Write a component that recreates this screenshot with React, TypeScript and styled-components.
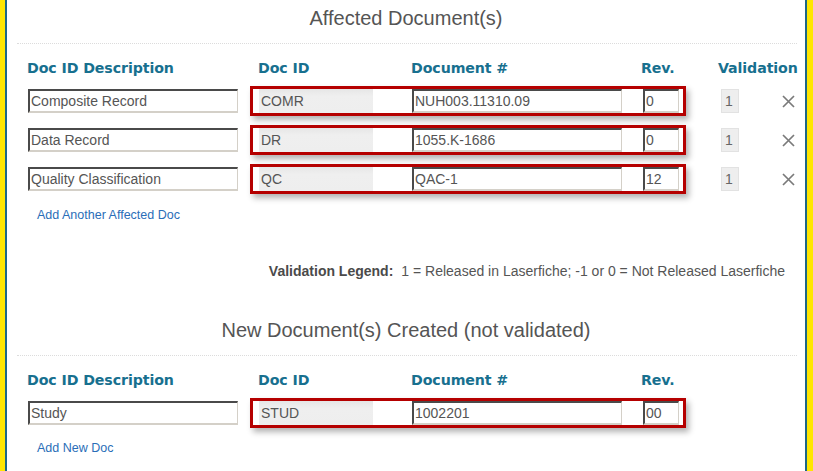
import React from 'react'
import styled, { createGlobalStyle } from 'styled-components'

const GlobalStyle = createGlobalStyle`
  html, body {
    margin: 0;
    padding: 0;
    background: #fff;
  }
  body {
    font-family: 'Liberation Sans', Arial, sans-serif;
  }
`

const Frame = styled.div({
  boxSizing: 'border-box',
  display: 'flex',
  height: '471px',
  borderLeft: '5px solid #ffe600',
  borderRight: '6px solid #ffe600',
  overflow: 'hidden',
})

const Panel = styled.div({
  flex: 1,
  display: 'flow-root',
  background: '#fff',
  borderLeft: '2px solid #1d6786',
  borderRight: '2px solid #1d6786',
})

const SectionTitle = styled.div<{ mt: number }>(props => ({
  marginTop: `${props.mt}px`,
  textAlign: 'center',
  fontSize: '20px',
  lineHeight: '24px',
  color: '#555',
}))

const Separator = styled.div({
  margin: '13px 8px 0 10px',
  borderTop: '1px dotted #dcdcdc',
})

const HeaderRow = styled.div({
  display: 'grid',
  gridTemplateColumns: '231px 153px 230px 77px auto',
  marginTop: '15px',
  paddingLeft: '20px',
  fontFamily: "'DejaVu Sans', Verdana, sans-serif",
  fontWeight: 700,
  fontSize: '14.2px',
  lineHeight: '18px',
  color: '#17708f',
  letterSpacing: '-0.1px',
})

const Rows = styled.div({
  display: 'flex',
  flexDirection: 'column',
  gap: '9px',
  marginTop: '9px',
  paddingLeft: '21px',
})

const Row = styled.div({
  display: 'flex',
  alignItems: 'center',
  height: '30px',
})

const TextInput = styled.input<{ w: number; ml?: number }>(props => ({
  boxSizing: 'border-box',
  width: `${props.w}px`,
  height: '24px',
  marginLeft: `${props.ml || 0}px`,
  padding: '0 1px',
  borderStyle: 'solid',
  borderWidth: '2px 1px 2px 2px',
  borderColor: '#4a4a4a #d4d0c8 #d4d0c8 #4a4a4a',
  fontFamily: "'Liberation Sans', Arial, sans-serif",
  fontSize: '14px',
  color: '#555',
  background: '#fff',
  outline: 'none',
}))

const IdGroup = styled.div({
  boxSizing: 'border-box',
  display: 'flex',
  alignItems: 'center',
  width: '436px',
  height: '30px',
  marginLeft: '12px',
  paddingLeft: '6px',
  border: '3px solid #b50000',
  boxShadow: '3px 4px 6px rgba(0, 0, 0, 0.3)',
})

const DocIdBox = styled.div({
  boxSizing: 'border-box',
  width: '114px',
  height: '24px',
  padding: '0 2px',
  background: 'linear-gradient(#e6e6e6, #efefef 30%, #eeeeee)',
  fontSize: '14px',
  lineHeight: '24px',
  color: '#555',
})

const ValidationBox = styled.div({
  boxSizing: 'border-box',
  width: '18px',
  height: '24px',
  marginLeft: '35px',
  paddingLeft: '3px',
  background: '#eeeeee',
  border: '1px solid #e2e2e2',
  fontSize: '14px',
  lineHeight: '22px',
  color: '#666',
})

const RemoveButton = styled.button({
  display: 'flex',
  alignItems: 'center',
  justifyContent: 'center',
  width: '14px',
  height: '14px',
  marginLeft: '42px',
  padding: 0,
  border: 'none',
  background: 'transparent',
  cursor: 'pointer',
})

const LinkText = styled.a<{ mt: number }>(props => ({
  display: 'block',
  marginTop: `${props.mt}px`,
  paddingLeft: '30px',
  fontSize: '12.5px',
  lineHeight: '16px',
  color: '#2a6eb8',
  textDecoration: 'none',
  cursor: 'pointer',
}))

const Legend = styled.div({
  marginTop: '40px',
  paddingRight: '20px',
  textAlign: 'right',
  fontSize: '14px',
  lineHeight: '17px',
  color: '#555',
})

const LegendLabel = styled.span({
  fontWeight: 700,
  color: '#4a4a4a',
  marginRight: '8px',
})

interface DocRow {
  description: string
  docId: string
  docNumber: string
  rev: string
  validation?: string
}

const affected: DocRow[] = [
  { description: 'Composite Record', docId: 'COMR', docNumber: 'NUH003.11310.09', rev: '0', validation: '1' },
  { description: 'Data Record', docId: 'DR', docNumber: '1055.K-1686', rev: '0', validation: '1' },
  { description: 'Quality Classification', docId: 'QC', docNumber: 'QAC-1', rev: '12', validation: '1' },
]

const created: DocRow[] = [{ description: 'Study', docId: 'STUD', docNumber: '1002201', rev: '00' }]

function CloseIcon() {
  return (
    <svg width="13" height="13" viewBox="0 0 13 13">
      <path d="M1 1 L12 12 M12 1 L1 12" stroke="#7a7a7a" strokeWidth="1.7" fill="none" />
    </svg>
  )
}

function DocRowView({ row }: { row: DocRow }) {
  return (
    <Row>
      <TextInput w={210} defaultValue={row.description} />
      <IdGroup>
        <DocIdBox>{row.docId}</DocIdBox>
        <TextInput w={210} ml={39} defaultValue={row.docNumber} />
        <TextInput w={36} ml={21} defaultValue={row.rev} />
      </IdGroup>
      {row.validation && (
        <>
          <ValidationBox>{row.validation}</ValidationBox>
          <RemoveButton aria-label="Remove">
            <CloseIcon />
          </RemoveButton>
        </>
      )}
    </Row>
  )
}

function Header({ withValidation }: { withValidation?: boolean }) {
  return (
    <HeaderRow>
      <div>Doc ID Description</div>
      <div>Doc ID</div>
      <div>Document #</div>
      <div>Rev.</div>
      {withValidation && <div>Validation</div>}
    </HeaderRow>
  )
}

export default function App() {
  return (
    <>
      <GlobalStyle />
      <Frame>
        <Panel>
          <SectionTitle mt={6}>Affected Document(s)</SectionTitle>
          <Separator />
          <Header withValidation />
          <Rows>
            {affected.map(r => (
              <DocRowView key={r.docId} row={r} />
            ))}
          </Rows>
          <LinkText mt={13}>Add Another Affected Doc</LinkText>
          <Legend>
            <LegendLabel>Validation Legend:</LegendLabel>1 = Released in Laserfiche; -1 or 0 = Not Released Laserfiche
          </Legend>
          <SectionTitle mt={38}>New Document(s) Created (not validated)</SectionTitle>
          <Separator />
          <Header />
          <Rows>
            {created.map(r => (
              <DocRowView key={r.docId} row={r} />
            ))}
          </Rows>
          <LinkText mt={12}>Add New Doc</LinkText>
        </Panel>
      </Frame>
    </>
  )
}
